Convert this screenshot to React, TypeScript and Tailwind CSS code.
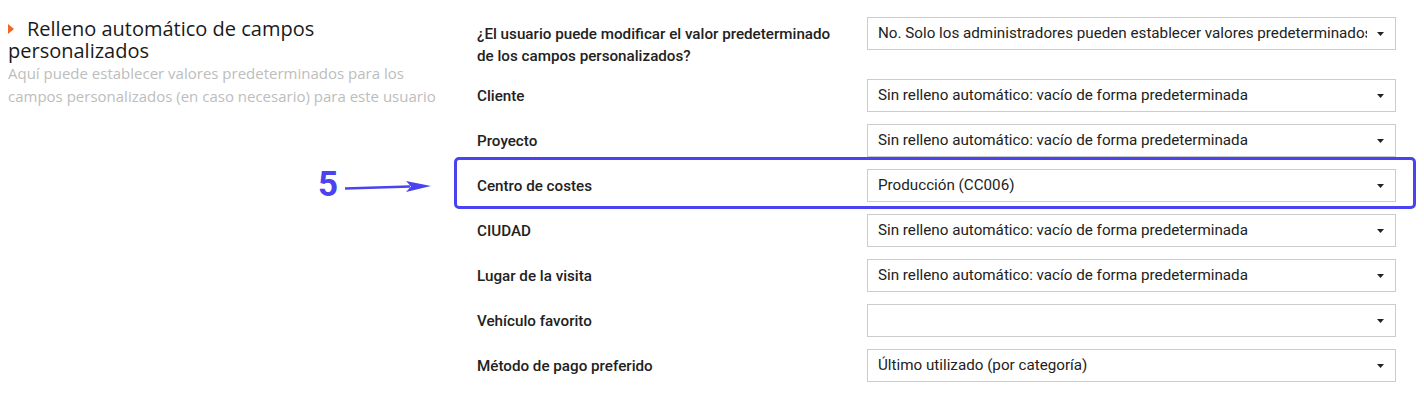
import React from "react";

const rows: { label: string; value: string; twoLine?: boolean }[] = [
  {
    label: "¿El usuario puede modificar el valor predeterminado de los campos personalizados?",
    value: "No. Solo los administradores pueden establecer valores predeterminados para sus campos personalizados",
    twoLine: true,
  },
  { label: "Cliente", value: "Sin relleno automático: vacío de forma predeterminada" },
  { label: "Proyecto", value: "Sin relleno automático: vacío de forma predeterminada" },
  { label: "Centro de costes", value: "Producción (CC006)" },
  { label: "CIUDAD", value: "Sin relleno automático: vacío de forma predeterminada" },
  { label: "Lugar de la visita", value: "Sin relleno automático: vacío de forma predeterminada" },
  { label: "Vehículo favorito", value: "" },
  { label: "Método de pago preferido", value: "Último utilizado (por categoría)" },
];

function Caret() {
  return (
    <svg width="7" height="4" viewBox="0 0 7 4" className="shrink-0">
      <path d="M0 0 H7 L3.5 4 Z" fill="#222" />
    </svg>
  );
}

export default function App() {
  return (
    <div className="relative w-[1424px] h-[403px] bg-white flex pt-[17px]">
      <div className="w-[448px] shrink-0 pl-[8px] pt-[1px]">
        <h2 className="text-[20px] leading-[22px] text-[#1a1a1a] font-['Open_Sans',sans-serif] font-normal">
          <span className="inline-block w-0 h-0 border-y-[5px] border-y-transparent border-l-[6px] border-l-[#f26522] mr-[13px] align-[2px]"></span>
          Relleno automático de campos personalizados
        </h2>
        <p className="text-[15px] leading-[23px] text-[#bdbdbd] font-['Open_Sans',sans-serif]">
          Aquí puede establecer valores predeterminados para los campos personalizados (en caso necesario) para este usuario
        </p>
      </div>
      <div className="flex flex-col gap-[12px] pl-[29px] font-['Roboto',sans-serif]">
        {rows.map((r) => (
          <div key={r.label} className={`flex ${r.twoLine ? "items-start" : "items-center"}`}>
            <div
              className={`w-[390px] pr-[20px] text-[15.2px] leading-[22px] font-medium text-[#222] ${
                r.twoLine ? "pt-[6px]" : ""
              }`}
            >
              {r.label}
            </div>
            <div className="w-[529px] h-[33px] border border-[#cccccc] bg-white flex items-center pl-[10px] pr-[11px] gap-[10px]">
              <span className="flex-1 overflow-hidden whitespace-nowrap text-[15.2px] text-[#222]">{r.value}</span>
              <Caret />
            </div>
          </div>
        ))}
      </div>

      <div className="absolute left-[454px] top-[157px] w-[962px] h-[52px] border-[3px] border-[#4b43ef] rounded-[5px] pointer-events-none"></div>
      <div className="absolute left-[318px] top-[165px] flex items-center gap-[6px] pointer-events-none">
        <span className="text-[#4b43ef] text-[35px] leading-[40px] font-bold font-['Roboto',sans-serif]">5</span>
        <svg width="88" height="16" viewBox="0 0 88 16" className="mt-[4px]">
          <path d="M1 9.5 L66 7.5" stroke="#4b43ef" strokeWidth="2.5" fill="none" />
          <path d="M62 2 L87 7 L62 13 L67 7.5 Z" fill="#4b43ef" />
        </svg>
      </div>
    </div>
  );
}
